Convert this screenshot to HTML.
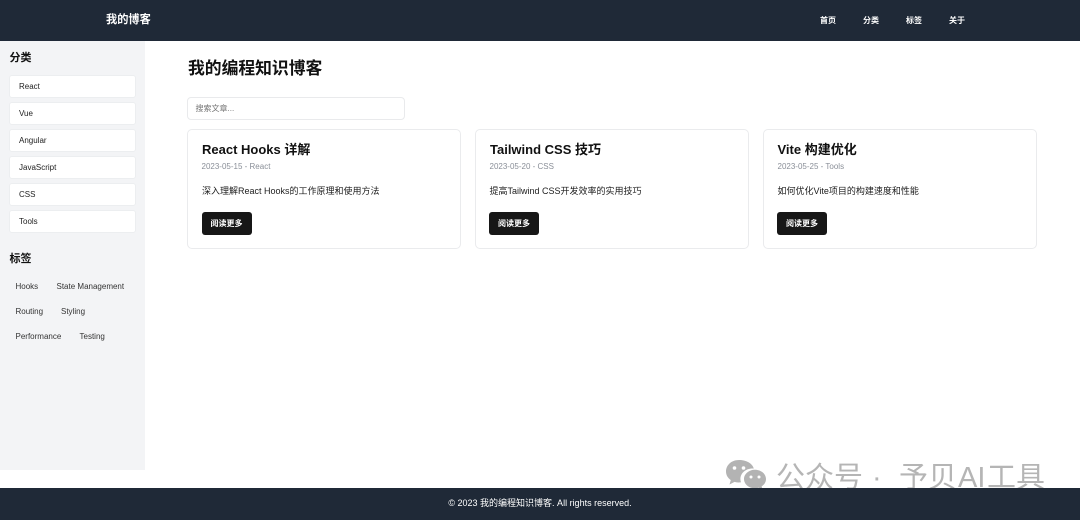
<!DOCTYPE html>
<html lang="zh"><head><meta charset="utf-8"><title>我的博客</title>
<style>
*{box-sizing:border-box;margin:0;padding:0}
html,body{width:1080px;height:520px;overflow:hidden;background:#fff;font-family:"Liberation Sans","Noto Sans CJK SC",sans-serif;color:#111}
.a{position:absolute;white-space:nowrap}
#hd{left:0;top:0;width:1080px;height:41px;background:#1f2937}
#ft{left:0;top:488px;width:1080px;height:32px;background:#1f2937;color:#fff;font-size:9px;line-height:31px;text-align:center}
#sb{left:0;top:41px;width:144.5px;height:429px;background:#f3f4f6}
.nav{top:15px;font-size:8px;line-height:11px;color:#fff;font-weight:700}
.h{font-size:11px;line-height:16px;font-weight:700;color:#111}
.it{left:9px;width:126.5px;height:22.5px;background:#fff;border:1px solid #eceef0;border-radius:3px;font-size:8px;line-height:21.5px;padding-left:9px;color:#222}
.tg{font-size:8px;line-height:11px;color:#333}
.card{top:129px;width:274px;height:119.5px;background:#fff;border:1px solid #eaebed;border-radius:5px}
.t{top:141px;font-size:13px;line-height:18px;font-weight:700;color:#111}
.d{top:160.5px;font-size:8px;line-height:11px;color:#8a8f98}
.p{top:185px;font-size:9px;line-height:12px;color:#1c1c1c}
.b{top:212px;width:50px;height:23px;background:#171717;border-radius:3px;color:#fff;font-size:8px;font-weight:700;line-height:23px;text-align:center}
.w{top:460px;font-size:29px;line-height:36px;color:#b5b5b5}
</style></head><body>
<div class="a" id="hd"></div>
<div class="a" style="left:106px;top:13px;font-size:11.2px;line-height:15px;font-weight:700;color:#fff">我的博客</div>
<div class="a nav" style="left:820px">首页</div>
<div class="a nav" style="left:863px">分类</div>
<div class="a nav" style="left:906px">标签</div>
<div class="a nav" style="left:949px">关于</div>

<div class="a" id="sb"></div>
<div class="a h" style="left:9.5px;top:49.5px">分类</div>
<div class="a it" style="top:75px">React</div>
<div class="a it" style="top:102px">Vue</div>
<div class="a it" style="top:129px">Angular</div>
<div class="a it" style="top:156px">JavaScript</div>
<div class="a it" style="top:183px">CSS</div>
<div class="a it" style="top:210px">Tools</div>
<div class="a h" style="left:9.5px;top:250.5px">标签</div>
<div class="a tg" style="left:15.5px;top:281px">Hooks</div>
<div class="a tg" style="left:56.5px;top:281px">State Management</div>
<div class="a tg" style="left:15.5px;top:306px">Routing</div>
<div class="a tg" style="left:61px;top:306px">Styling</div>
<div class="a tg" style="left:15.5px;top:331px">Performance</div>
<div class="a tg" style="left:79.5px;top:331px">Testing</div>

<div class="a" style="left:188px;top:57.5px;font-size:16.8px;line-height:22px;font-weight:700;color:#111">我的编程知识博客</div>
<div class="a" style="left:187px;top:97px;width:218px;height:23px;background:#fff;border:1px solid #e9eaec;border-radius:4px;font-size:8px;line-height:21px;padding-left:7.5px;color:#757575">搜索文章...</div>

<div class="a card" style="left:187px"></div>
<div class="a t" style="left:202px">React Hooks 详解</div>
<div class="a d" style="left:201.5px">2023-05-15 - React</div>
<div class="a p" style="left:202px">深入理解React Hooks的工作原理和使用方法</div>
<div class="a b" style="left:201.5px">阅读更多</div>

<div class="a card" style="left:475px"></div>
<div class="a t" style="left:490px">Tailwind CSS 技巧</div>
<div class="a d" style="left:489.5px">2023-05-20 - CSS</div>
<div class="a p" style="left:489.5px">提高Tailwind CSS开发效率的实用技巧</div>
<div class="a b" style="left:489px">阅读更多</div>

<div class="a card" style="left:763px"></div>
<div class="a t" style="left:777.5px">Vite 构建优化</div>
<div class="a d" style="left:777.5px">2023-05-25 - Tools</div>
<div class="a p" style="left:777.5px">如何优化Vite项目的构建速度和性能</div>
<div class="a b" style="left:777px">阅读更多</div>

<svg class="a" style="left:724px;top:458px" width="44" height="36" viewBox="0 0 44 36">
<path d="M15 2C7 2 2 7.500 2 13.500c0 3.500 1.800 6.500 4.800 8.600L5.500 26.500l5-2.600c1.500.4 3 .6 4.500.6 1 0 1.500-.1 2-.2-.4-1.100-.6-2.200-.6-3.300 0-6 5.500-10.500 12-10.500h1.400C28.500 5.500 22.500 2 15 2z" fill="#b3b3b3"/>
<path d="M42 21c0-5.200-5-9.300-11-9.300S20 15.800 20 21s5 9.300 11 9.300c1.200 0 2.500-.2 3.700-.5l4 2.200-1.100-3.600C40.400 26.600 42 24 42 21z" fill="#b3b3b3"/>
<circle cx="10.500" cy="10" r="1.800" fill="#fff"/><circle cx="19.500" cy="10" r="1.800" fill="#fff"/>
<circle cx="27" cy="19" r="1.500" fill="#fff"/><circle cx="35" cy="19" r="1.500" fill="#fff"/>
</svg>
<div class="a w" style="left:776px">公众号</div>
<div class="a w" style="left:872px">·</div>
<div class="a w" style="left:899px">予贝</div>
<div class="a w" style="left:958px">AI</div>
<div class="a w" style="left:987px">工具</div>
<div class="a" id="ft">© 2023 我的编程知识博客. All rights reserved.</div>
</body></html>
